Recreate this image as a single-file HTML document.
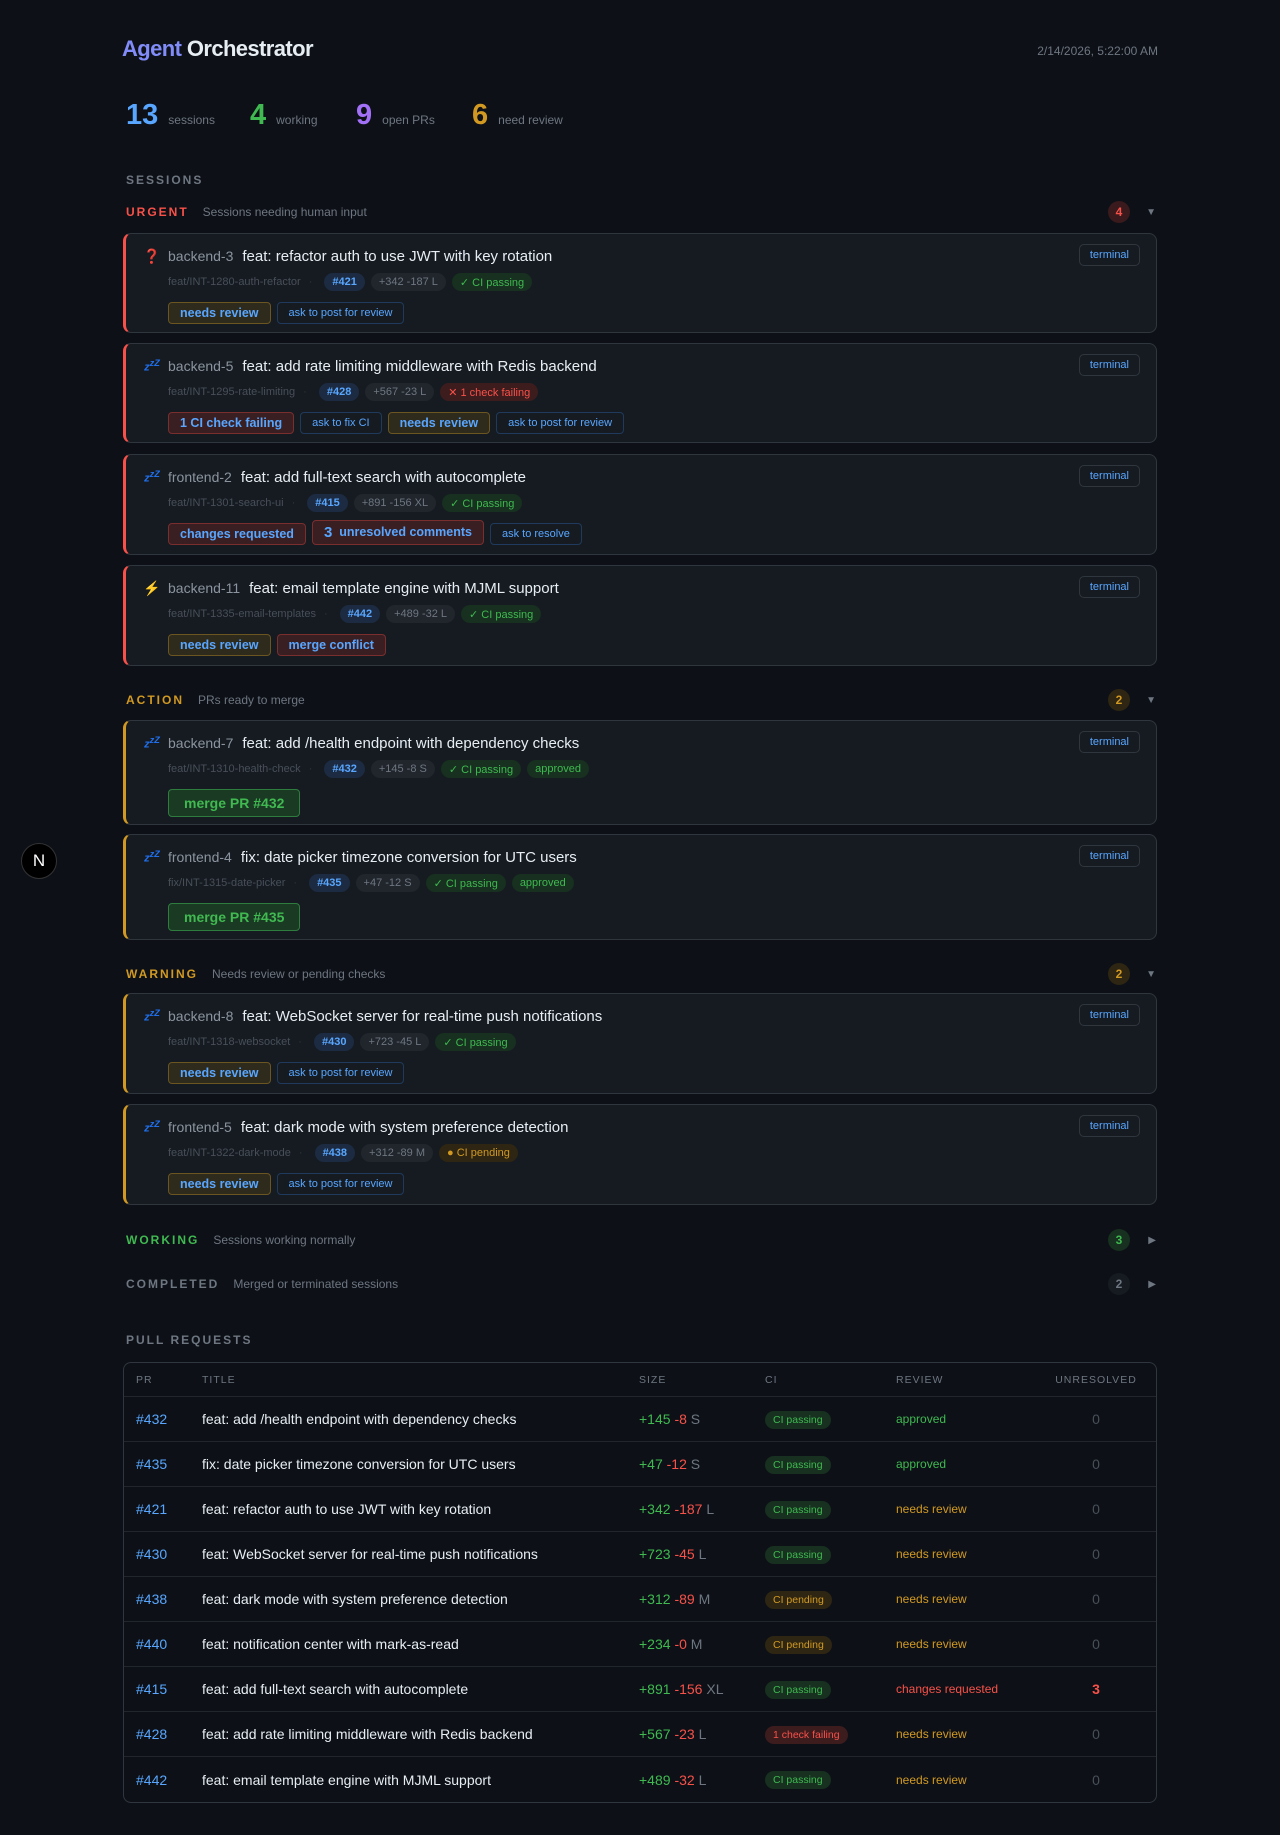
<!DOCTYPE html>
<html><head><meta charset="utf-8"><style>
*{box-sizing:border-box;margin:0;padding:0}
body{width:1280px;height:1835px;background:#0d1117;font-family:"Liberation Sans",sans-serif;color:#e6edf3;position:relative;overflow:hidden}
.abs{position:absolute}
.h1{left:122px;top:36px;font-size:22px;font-weight:bold;letter-spacing:-0.6px;color:#e6edf3}
.h1 span{color:#818cf8}
.date{right:122px;top:44px;font-size:12px;color:#6e7681}
.stat{top:99px;font-size:12px;color:#6e7681;display:flex;align-items:baseline}
.stat b{font-size:29px;margin-right:10px}
.lbl{font-size:12px;font-weight:bold;letter-spacing:2px}
.sec{left:126px;width:1030px;display:flex;align-items:center;height:20px}
.sec .d{font-size:12px;color:#6e7681;margin-left:14px;letter-spacing:0;font-weight:normal}
.sec .cnt{position:absolute;right:26px;width:22px;height:22px;border-radius:11px;font-size:12px;font-weight:bold;display:flex;align-items:center;justify-content:center}
.sec .ar{position:absolute;right:0;font-size:10px;color:#6e7681}
.card{left:123px;width:1034px;background:#161b22;border:1px solid #30363d;border-radius:8px;border-left:3px solid #f85149}
.card.o{border-left-color:#d29922}
.r1{position:absolute;left:16px;top:12px;height:20px;display:flex;align-items:center;white-space:nowrap}
.ic{width:20px;font-size:14px;margin-right:6px;text-align:center}
.nm{font-size:14px;color:#8b949e;margin-right:9px}
.tt{font-size:15px;color:#e6edf3}
.term{position:absolute;right:16px;top:10px;height:22px;padding:0 10px;border:1px solid #30363d;border-radius:5px;font-size:11px;color:#58a6ff;display:flex;align-items:center}
.r2{position:absolute;left:42px;top:39px;height:18px;display:flex;align-items:center;font-size:11px;white-space:nowrap}
.br{color:#484f58;margin-right:8px}
.dot{color:#30363d;margin-right:12px}
.ch{height:18px;border-radius:9px;padding:0 8px;display:flex;align-items:center;margin-right:6px;font-size:11px}
.pr{background:#1c2b41;color:#58a6ff;font-weight:bold}
.sz{background:#21262d;color:#6e7681}
.ok{background:#17301f;color:#3fb950}
.bad{background:#3d1c1e;color:#f85149}
.pend{background:#2e2612;color:#d29922}
.r3{position:absolute;left:42px;top:68px;display:flex;align-items:center;white-space:nowrap}
.bt{height:22px;border-radius:4px;padding:0 11px;display:flex;align-items:center;margin-right:6px;font-size:11px;color:#58a6ff;border:1px solid #1f3a5c}
.bt.y{background:#2e2a1c;border-color:#6b5520;font-weight:bold;font-size:12.5px}
.bt.r{background:#3a1f22;border-color:#7a2e2e;font-weight:bold;font-size:12.5px}
.bt.g{background:#1b3a24;border-color:#2e7d3e;color:#3fb950;font-weight:bold;font-size:14px;height:28px;padding:0 15px}
.z{color:#1f6feb;font-size:11px;font-weight:bold;font-style:italic}
table{position:absolute;left:123px;top:1362px;width:1034px;border:1px solid #30363d;border-radius:8px;border-collapse:separate;border-spacing:0;font-size:14px;table-layout:fixed}
th{height:34px;text-align:left;font-size:10.5px;color:#6e7681;letter-spacing:1px;font-weight:normal;border-bottom:1px solid #21262d}
td{height:45px;border-bottom:1px solid #21262d;white-space:nowrap}
tr:last-child td{border-bottom:none}
td.p{color:#58a6ff;padding-left:12px}
th.p{padding-left:12px}
.a{color:#3fb950}.dl{color:#f85149}.s{color:#6e7681}
.cib{display:inline-block;font-size:10.5px;padding:3px 8px;border-radius:9px}
td.u{text-align:center;color:#484f58}
.nbtn{left:21px;top:843px;width:36px;height:36px;border-radius:50%;background:#000;border:1px solid #333;color:#fff;font-size:17px;display:flex;align-items:center;justify-content:center}
</style></head><body>
<div class="abs h1"><span>Agent</span> Orchestrator</div>
<div class="abs date">2/14/2026, 5:22:00 AM</div>
<div class="abs stat" style="left:126px"><b style="color:#58a6ff">13</b>sessions</div>
<div class="abs stat" style="left:250px"><b style="color:#3fb950">4</b>working</div>
<div class="abs stat" style="left:356px"><b style="color:#a371f7">9</b>open PRs</div>
<div class="abs stat" style="left:472px"><b style="color:#d29922">6</b>need review</div>
<div class="abs lbl" style="left:126px;top:173px;color:#6e7681">SESSIONS</div>

<div class="abs sec" style="top:202px"><span class="lbl" style="color:#f85149">URGENT</span><span class="d">Sessions needing human input</span><span class="cnt" style="background:#3a1a1c;color:#f85149">4</span><span class="ar">▼</span></div>

<div class="abs card" style="top:233px;height:100px">
<div class="r1"><span class="ic" style="color:#f85149">❓</span><span class="nm">backend-3</span><span class="tt">feat: refactor auth to use JWT with key rotation</span></div>
<div class="term">terminal</div>
<div class="r2"><span class="br">feat/INT-1280-auth-refactor</span><span class="dot">·</span><span class="ch pr">#421</span><span class="ch sz">+342 -187 L</span><span class="ch ok">✓ CI passing</span></div>
<div class="r3"><span class="bt y">needs review</span><span class="bt">ask to post for review</span></div></div>

<div class="abs card" style="top:343px;height:100px">
<div class="r1"><span class="ic z">z<sup>z</sup><sup>Z</sup></span><span class="nm">backend-5</span><span class="tt">feat: add rate limiting middleware with Redis backend</span></div>
<div class="term">terminal</div>
<div class="r2"><span class="br">feat/INT-1295-rate-limiting</span><span class="dot">·</span><span class="ch pr">#428</span><span class="ch sz">+567 -23 L</span><span class="ch bad">✕ 1 check failing</span></div>
<div class="r3"><span class="bt r">1 CI check failing</span><span class="bt">ask to fix CI</span><span class="bt y">needs review</span><span class="bt">ask to post for review</span></div></div>

<div class="abs card" style="top:454px;height:101px">
<div class="r1"><span class="ic z">z<sup>z</sup><sup>Z</sup></span><span class="nm">frontend-2</span><span class="tt">feat: add full-text search with autocomplete</span></div>
<div class="term">terminal</div>
<div class="r2"><span class="br">feat/INT-1301-search-ui</span><span class="dot">·</span><span class="ch pr">#415</span><span class="ch sz">+891 -156 XL</span><span class="ch ok">✓ CI passing</span></div>
<div class="r3"><span class="bt r">changes requested</span><span class="bt r" style="height:25px;margin-top:-4px"><span style="font-size:15px;margin-right:7px">3</span>unresolved comments</span><span class="bt">ask to resolve</span></div></div>

<div class="abs card" style="top:565px;height:101px">
<div class="r1"><span class="ic" style="color:#d29922">⚡</span><span class="nm">backend-11</span><span class="tt">feat: email template engine with MJML support</span></div>
<div class="term">terminal</div>
<div class="r2"><span class="br">feat/INT-1335-email-templates</span><span class="dot">·</span><span class="ch pr">#442</span><span class="ch sz">+489 -32 L</span><span class="ch ok">✓ CI passing</span></div>
<div class="r3"><span class="bt y">needs review</span><span class="bt r">merge conflict</span></div></div>

<div class="abs sec" style="top:690px"><span class="lbl" style="color:#d29922">ACTION</span><span class="d">PRs ready to merge</span><span class="cnt" style="background:#2e2612;color:#d29922">2</span><span class="ar">▼</span></div>

<div class="abs card o" style="top:720px;height:105px">
<div class="r1"><span class="ic z">z<sup>z</sup><sup>Z</sup></span><span class="nm">backend-7</span><span class="tt">feat: add /health endpoint with dependency checks</span></div>
<div class="term">terminal</div>
<div class="r2"><span class="br">feat/INT-1310-health-check</span><span class="dot">·</span><span class="ch pr">#432</span><span class="ch sz">+145 -8 S</span><span class="ch ok">✓ CI passing</span><span class="ch ok">approved</span></div>
<div class="r3"><span class="bt g">merge PR #432</span></div></div>

<div class="abs card o" style="top:834px;height:106px">
<div class="r1"><span class="ic z">z<sup>z</sup><sup>Z</sup></span><span class="nm">frontend-4</span><span class="tt">fix: date picker timezone conversion for UTC users</span></div>
<div class="term">terminal</div>
<div class="r2"><span class="br">fix/INT-1315-date-picker</span><span class="dot">·</span><span class="ch pr">#435</span><span class="ch sz">+47 -12 S</span><span class="ch ok">✓ CI passing</span><span class="ch ok">approved</span></div>
<div class="r3"><span class="bt g">merge PR #435</span></div></div>

<div class="abs sec" style="top:964px"><span class="lbl" style="color:#d29922">WARNING</span><span class="d">Needs review or pending checks</span><span class="cnt" style="background:#2e2612;color:#d29922">2</span><span class="ar">▼</span></div>

<div class="abs card o" style="top:993px;height:101px">
<div class="r1"><span class="ic z">z<sup>z</sup><sup>Z</sup></span><span class="nm">backend-8</span><span class="tt">feat: WebSocket server for real-time push notifications</span></div>
<div class="term">terminal</div>
<div class="r2"><span class="br">feat/INT-1318-websocket</span><span class="dot">·</span><span class="ch pr">#430</span><span class="ch sz">+723 -45 L</span><span class="ch ok">✓ CI passing</span></div>
<div class="r3"><span class="bt y">needs review</span><span class="bt">ask to post for review</span></div></div>

<div class="abs card o" style="top:1104px;height:101px">
<div class="r1"><span class="ic z">z<sup>z</sup><sup>Z</sup></span><span class="nm">frontend-5</span><span class="tt">feat: dark mode with system preference detection</span></div>
<div class="term">terminal</div>
<div class="r2"><span class="br">feat/INT-1322-dark-mode</span><span class="dot">·</span><span class="ch pr">#438</span><span class="ch sz">+312 -89 M</span><span class="ch pend">● CI pending</span></div>
<div class="r3"><span class="bt y">needs review</span><span class="bt">ask to post for review</span></div></div>

<div class="abs sec" style="top:1230px"><span class="lbl" style="color:#3fb950">WORKING</span><span class="d">Sessions working normally</span><span class="cnt" style="background:#17301f;color:#3fb950">3</span><span class="ar">▶</span></div>
<div class="abs sec" style="top:1274px"><span class="lbl" style="color:#6e7681">COMPLETED</span><span class="d">Merged or terminated sessions</span><span class="cnt" style="background:#161b22;color:#6e7681">2</span><span class="ar">▶</span></div>

<div class="abs lbl" style="left:126px;top:1333px;color:#6e7681">PULL REQUESTS</div>
<table>
<tr><th class="p" style="width:78px">PR</th><th style="width:437px">TITLE</th><th style="width:126px">SIZE</th><th style="width:131px">CI</th><th style="width:140px">REVIEW</th><th style="text-align:center">UNRESOLVED</th></tr>
<tr><td class="p">#432</td><td>feat: add /health endpoint with dependency checks</td><td><span class="a">+145</span> <span class="dl">-8</span> <span class="s">S</span></td><td><span class="cib ok">CI passing</span></td><td class="a" style="font-size:12px">approved</td><td class="u">0</td></tr>
<tr><td class="p">#435</td><td>fix: date picker timezone conversion for UTC users</td><td><span class="a">+47</span> <span class="dl">-12</span> <span class="s">S</span></td><td><span class="cib ok">CI passing</span></td><td class="a" style="font-size:12px">approved</td><td class="u">0</td></tr>
<tr><td class="p">#421</td><td>feat: refactor auth to use JWT with key rotation</td><td><span class="a">+342</span> <span class="dl">-187</span> <span class="s">L</span></td><td><span class="cib ok">CI passing</span></td><td style="font-size:12px;color:#d29922">needs review</td><td class="u">0</td></tr>
<tr><td class="p">#430</td><td>feat: WebSocket server for real-time push notifications</td><td><span class="a">+723</span> <span class="dl">-45</span> <span class="s">L</span></td><td><span class="cib ok">CI passing</span></td><td style="font-size:12px;color:#d29922">needs review</td><td class="u">0</td></tr>
<tr><td class="p">#438</td><td>feat: dark mode with system preference detection</td><td><span class="a">+312</span> <span class="dl">-89</span> <span class="s">M</span></td><td><span class="cib pend">CI pending</span></td><td style="font-size:12px;color:#d29922">needs review</td><td class="u">0</td></tr>
<tr><td class="p">#440</td><td>feat: notification center with mark-as-read</td><td><span class="a">+234</span> <span class="dl">-0</span> <span class="s">M</span></td><td><span class="cib pend">CI pending</span></td><td style="font-size:12px;color:#d29922">needs review</td><td class="u">0</td></tr>
<tr><td class="p">#415</td><td>feat: add full-text search with autocomplete</td><td><span class="a">+891</span> <span class="dl">-156</span> <span class="s">XL</span></td><td><span class="cib ok">CI passing</span></td><td style="font-size:12px;color:#f85149">changes requested</td><td class="u" style="color:#f85149;font-weight:bold">3</td></tr>
<tr><td class="p">#428</td><td>feat: add rate limiting middleware with Redis backend</td><td><span class="a">+567</span> <span class="dl">-23</span> <span class="s">L</span></td><td><span class="cib bad">1 check failing</span></td><td style="font-size:12px;color:#d29922">needs review</td><td class="u">0</td></tr>
<tr><td class="p">#442</td><td>feat: email template engine with MJML support</td><td><span class="a">+489</span> <span class="dl">-32</span> <span class="s">L</span></td><td><span class="cib ok">CI passing</span></td><td style="font-size:12px;color:#d29922">needs review</td><td class="u">0</td></tr>
</table>
<div class="abs nbtn">N</div>
</body></html>
